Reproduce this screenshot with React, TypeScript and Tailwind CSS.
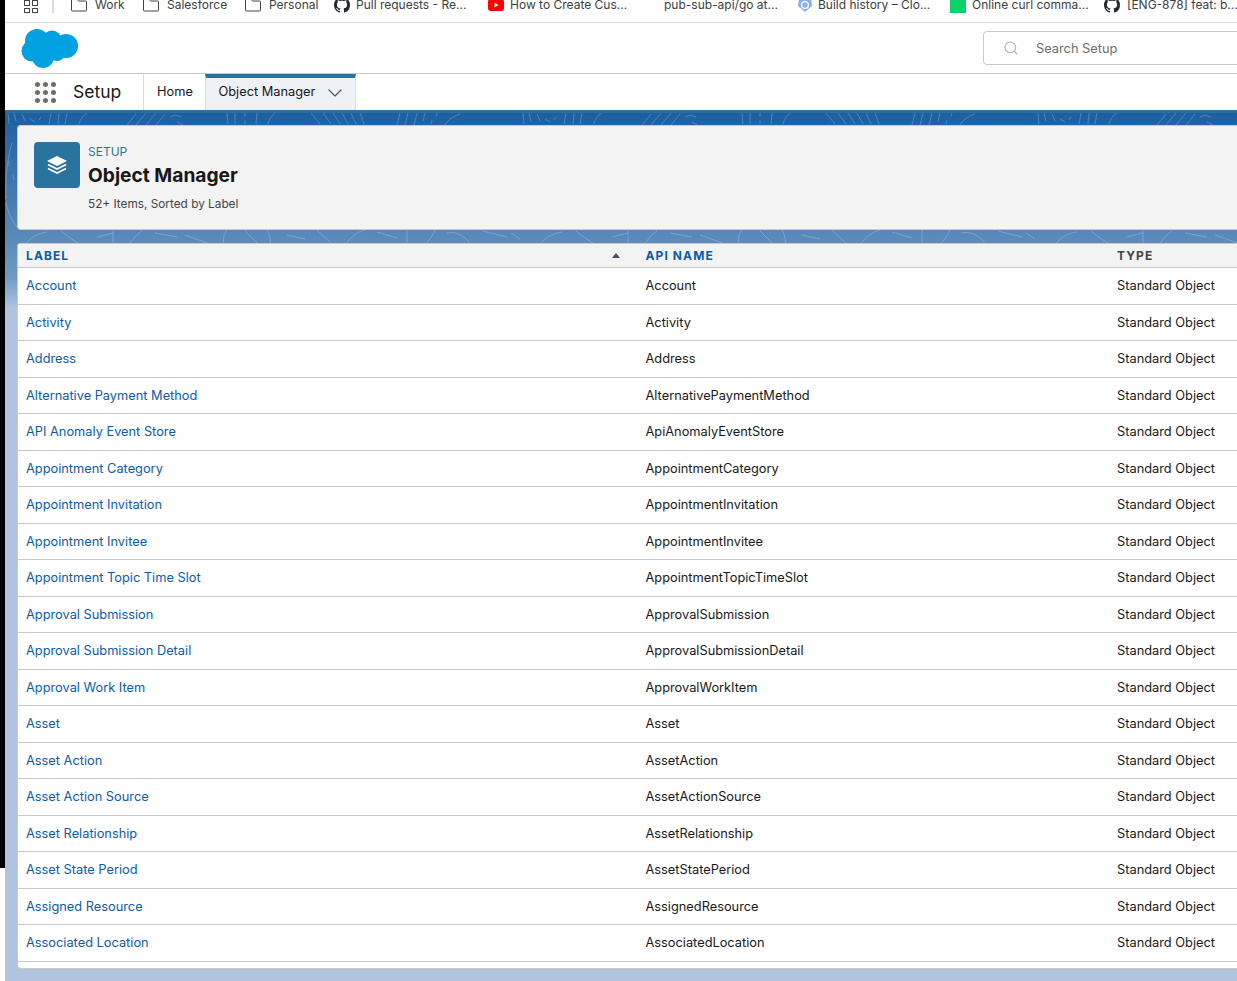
import { Search, ChevronDown } from "lucide-react";

const rows = [
  ["Account", "Account"],
  ["Activity", "Activity"],
  ["Address", "Address"],
  ["Alternative Payment Method", "AlternativePaymentMethod"],
  ["API Anomaly Event Store", "ApiAnomalyEventStore"],
  ["Appointment Category", "AppointmentCategory"],
  ["Appointment Invitation", "AppointmentInvitation"],
  ["Appointment Invitee", "AppointmentInvitee"],
  ["Appointment Topic Time Slot", "AppointmentTopicTimeSlot"],
  ["Approval Submission", "ApprovalSubmission"],
  ["Approval Submission Detail", "ApprovalSubmissionDetail"],
  ["Approval Work Item", "ApprovalWorkItem"],
  ["Asset", "Asset"],
  ["Asset Action", "AssetAction"],
  ["Asset Action Source", "AssetActionSource"],
  ["Asset Relationship", "AssetRelationship"],
  ["Asset State Period", "AssetStatePeriod"],
  ["Assigned Resource", "AssignedResource"],
  ["Associated Location", "AssociatedLocation"],
];

function GitHub() {
  return (
    <svg viewBox="0 0 16 16" className="h-4 w-4 shrink-0" fill="#24292f">
      <path d="M8 0C3.58 0 0 3.58 0 8c0 3.54 2.29 6.53 5.47 7.59.4.07.55-.17.55-.38 0-.19-.01-.82-.01-1.49-2.01.37-2.53-.49-2.69-.94-.09-.23-.48-.94-.82-1.13-.28-.15-.68-.52-.01-.53.63-.01 1.08.58 1.23.82.72 1.21 1.87.87 2.33.66.07-.52.28-.87.51-1.07-1.78-.2-3.64-.89-3.64-3.95 0-.87.31-1.59.82-2.15-.08-.2-.36-1.02.08-2.12 0 0 .67-.21 2.2.82.64-.18 1.32-.27 2-.27s1.36.09 2 .27c1.53-1.04 2.2-.82 2.2-.82.44 1.1.16 1.92.08 2.12.51.56.82 1.27.82 2.15 0 3.07-1.87 3.75-3.65 3.95.29.25.54.73.54 1.48 0 1.07-.01 1.93-.01 2.2 0 .21.15.46.55.38A8.01 8.01 0 0 0 16 8c0-4.42-3.58-8-8-8z" />
    </svg>
  );
}

function FolderIcon() {
  return (
    <svg viewBox="0 0 16 14" className="h-[14px] w-4 shrink-0" fill="none" stroke="#444" strokeWidth="1">
      <path d="M.5 1.5a1 1 0 0 1 1-1h4l2 2.5h7a1 1 0 0 1 1 1v8a1 1 0 0 1-1 1h-13a1 1 0 0 1-1-1z" />
    </svg>
  );
}

function Bookmark({ icon, text, className }: { icon: React.ReactNode; text: string; className: string }) {
  return (
    <div className={`flex shrink-0 items-center text-[12px] text-[#3c4043] ${className}`}>
      {icon}
      <span className="whitespace-nowrap">{text}</span>
    </div>
  );
}

// decorative line work in the blue band, repeats every 515px
function BandPattern() {
  return (
    <svg className="absolute left-0 top-0 h-[132px] w-full" aria-hidden="true">
      <defs>
        <pattern id="band" width="515" height="132" patternUnits="userSpaceOnUse">
          <g fill="none" stroke="#fff" strokeOpacity="0.22" strokeWidth="1">
            <path d="M3 0l1 11M9 0l2 8M17 1l3 7M25 6l5 3M36 4l-2 3M46 0l-2 11M54 0l-1 11M62 0l-2 11M82 0c-5 3-7 7-8 11" />
            <path d="M122 12l9-11M131 12l10-12M141 12l10-12M151 12l9-11M165 4l5-2 6 2M172 9l6 3" />
            <path d="M222 0l1 11M230 0v11M240 0v4M240 7v4M252 0l-1 11M270 0c-4 3-6 7-7 11" />
            <path d="M306 0l9 11M318 0l8 11M328 0l7 11M337 0l6 11M346 0l5 11M355 0l4 11" />
            <path d="M392 12l3-12M400 12l3-12M409 12l3-12M418 8l2-8M426 11l1-4M432 0l-1 3M455 1c-7 2-12 6-15 11" />
            <path d="M7 30c-5 16-7 38-6 56M1 90c2 10 6 18 11 24M4 48v5M8 62l1 5" />
            <path d="M20 132c5-8 14-12 22-13M56 118c6 5 12 9 20 14M92 124l16-4M108 118v14M124 132c4-6 8-11 13-14" />
            <path d="M150 120l22 4M180 122l28 10M222 117c-4 5-4 10-3 15M240 118l14 14M262 117c3 6 4 10 3 15" />
            <path d="M282 122l18 4M312 117l16 15M340 132c6-8 12-13 20-15M372 119l20 6M402 117v15M420 132c5-6 8-10 10-15" />
            <path d="M442 120c10-2 18 3 24 12M478 118l24 6M506 120l9 6" />
          </g>
        </pattern>
      </defs>
      <rect width="100%" height="132" fill="url(#band)" />
    </svg>
  );
}

export default function App() {
  return (
    <div className="flex h-[981px] w-[1237px] overflow-hidden bg-white font-['Inter',sans-serif] text-[12.8px] text-[#181818]">
      <div className="h-[868px] w-[5px] shrink-0 bg-black" />
      <div className="flex min-w-0 flex-1 flex-col">
        {/* bookmarks */}
        <div className="flex h-[23px] shrink-0 items-end overflow-hidden border-b border-[#dedede] pb-[9px] pl-[19px] leading-[16px]">
          <div className="mr-[14px] grid h-[13px] w-[14px] shrink-0 grid-cols-2 gap-[2px]">
            <div className="border border-[#444]" />
            <div className="border border-[#444]" />
            <div className="border border-[#444]" />
            <div className="border border-[#444]" />
          </div>
          <div className="mr-[17px] h-[14px] w-[2px] shrink-0 bg-[#d5def0]" />
          <Bookmark className="w-[72px] gap-[8px]" text="Work" icon={<FolderIcon />} />
          <Bookmark className="w-[102px] gap-[8px]" text="Salesforce" icon={<FolderIcon />} />
          <Bookmark className="w-[89px] gap-[8px]" text="Personal" icon={<FolderIcon />} />
          <Bookmark className="w-[154px] gap-[6px]" text="Pull requests - Re..." icon={<GitHub />} />
          <Bookmark
            className="w-[176px] gap-[6px]"
            text="How to Create Cus..."
            icon={
              <svg viewBox="0 0 16 12" className="h-3 w-4 shrink-0">
                <rect width="16" height="12" rx="3" fill="#f00" />
                <path d="M6.5 3.5v5l4-2.5z" fill="#fff" />
              </svg>
            }
          />
          <span className="w-[133px] shrink-0 whitespace-nowrap text-[12px] text-[#3c4043]">pub-sub-api/go at...</span>
          <Bookmark
            className="w-[153px] gap-[5px]"
            text="Build history – Clo..."
            icon={
              <svg viewBox="0 0 16 16" className="h-4 w-4 shrink-0">
                <path d="M2 1.5h12l1 7.5-7 6-7-6z" fill="#8ab0ea" />
                <circle cx="8" cy="8" r="3.4" fill="none" stroke="#fff" strokeWidth="1.4" />
              </svg>
            }
          />
          <Bookmark className="w-[154px] gap-[6px]" text="Online curl comma..." icon={<div className="h-4 w-4 shrink-0 bg-[#0ad26b]" />} />
          <Bookmark className="w-[150px] gap-[7px]" text="[ENG-878] feat: b..." icon={<GitHub />} />
        </div>

        {/* global header */}
        <div className="flex h-[51px] shrink-0 items-center justify-between border-b border-[#c9c9c9] pl-[16px]">
          <svg viewBox="0 0 58 42" className="h-[42px] w-[58px]">
            <g fill="#00a1e0">
              <circle cx="16" cy="14" r="12" />
              <circle cx="31" cy="13" r="9.5" />
              <circle cx="45" cy="19" r="12" />
              <circle cx="11" cy="24" r="10.5" />
              <circle cx="22" cy="30" r="11" />
              <circle cx="36" cy="26" r="8" />
            </g>
          </svg>
          <div className="-mr-[40px] flex h-[34px] w-[294px] items-center rounded border border-[#c9c9c9] pl-[19px] text-[#706e6b]">
            <Search size={16} strokeWidth={1.6} className="mr-[17px] text-[#aeaeae]" />
            <span className="mt-[2px]">Search Setup</span>
          </div>
        </div>

        {/* app nav */}
        <div className="flex h-[36px] shrink-0 items-stretch">
          <div className="flex w-[139px] items-center border-r border-[#dddbda] pl-[30px]">
            <div className="mr-[17px] grid grid-cols-3 gap-[3px]">
              {Array.from({ length: 9 }).map((_, i) => (
                <div key={i} className="h-[5px] w-[5px] rounded-full bg-[#706e6b]" />
              ))}
            </div>
            <span className="text-[17.5px] text-[#181818]">Setup</span>
          </div>
          <div className="flex w-[61px] items-center justify-center pl-[1px]">Home</div>
          <div className="flex w-[151px] items-center border-x border-t-[4px] border-x-[#dddbda] border-t-[#2a739e] bg-[#eef1f6] pb-[4px] pl-[12.5px]">
            Object Manager
            <ChevronDown size={24} strokeWidth={1.2} className="ml-[8px] mt-[2px] text-[#555]" />
          </div>
        </div>

        {/* page */}
        <div className="relative flex-1 border-t-[3px] border-[#2a6f9f] bg-[linear-gradient(#1c5f9f_0px,#5a8aba_125px,#6f9ac5_165px,#b0c4df_195px)] pb-[13px] pl-[12px]">
          <BandPattern />
          <div className="relative mt-[12px] flex h-[105px] items-start rounded-l border border-r-0 border-[#c9c9c9] bg-[#f3f3f3] pl-[16px] pt-[16px]">
            <div className="flex h-[46px] w-[46px] shrink-0 items-center justify-center rounded bg-[#2a739e]">
              <svg viewBox="0 0 20 20" className="h-[20px] w-[20px]">
                <path d="M10 1l10 5-10 5L0 6z" fill="#fff" />
                <path d="M1 9.5l9 4.5 9-4.5M1 13.5l9 4.5 9-4.5" fill="none" stroke="#fff" strokeWidth="1.8" />
              </svg>
            </div>
            <div className="ml-[8px] mt-[2px]">
              <div className="text-[12px] leading-[16px] text-[#2a739e]">SETUP</div>
              <div className="mt-[2px] text-[19.2px] font-bold leading-[26px] text-[#181818]">Object Manager</div>
              <div className="mt-[8px] text-[11.8px] leading-[16px] text-[#444]">52+ Items, Sorted by Label</div>
            </div>
          </div>
          <div className="relative mt-[13px] rounded-l border-b border-l border-t border-[#c9c9c9] bg-white pb-[6px]">
            <div className="flex h-[24px] items-center border-b border-[#c9c9c9] bg-[#f3f3f3] text-[12px] font-bold tracking-[1.1px]">
              <div className="flex w-[619px] items-center pl-[8px] pr-[17px] text-[#0b5cab]">
                <span className="flex-1">LABEL</span>
                <span className="h-0 w-0 border-x-[4px] border-b-[5px] border-x-transparent border-b-[#3e5266]" />
              </div>
              <div className="w-[480px] pl-[8.5px] text-[#0b5cab]">API NAME</div>
              <div className="text-[#444]">TYPE</div>
            </div>
            {rows.map(([label, api]) => (
              <div key={label} className="flex h-[36.5px] items-center border-b border-[#c9c9c9]">
                <div className="w-[619px] pl-[8px] text-[#0b5cab]">{label}</div>
                <div className="w-[480px] pl-[8.5px]">{api}</div>
                <div className="whitespace-nowrap">Standard Object</div>
              </div>
            ))}
          </div>
        </div>
      </div>
    </div>
  );
}
